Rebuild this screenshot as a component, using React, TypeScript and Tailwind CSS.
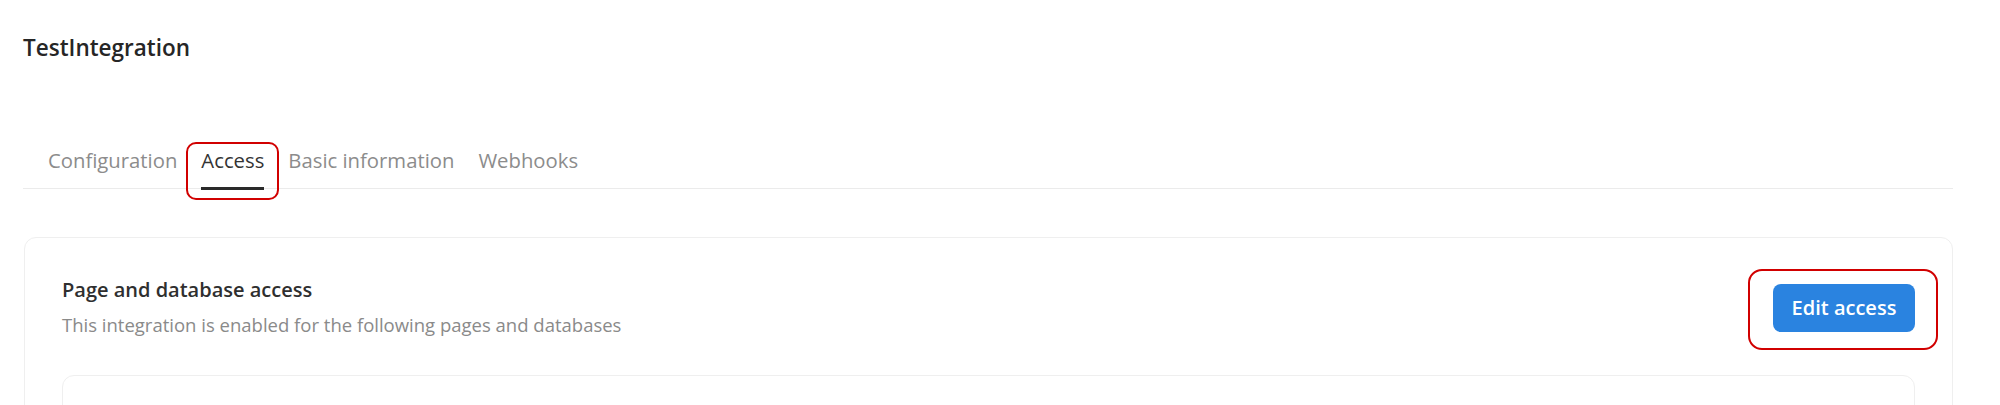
import { useState } from 'react';

const tabs = ['Configuration', 'Access', 'Basic information', 'Webhooks'];

export default function App() {
  const [active, setActive] = useState('Access');

  return (
    <div className="min-h-screen bg-white pl-[23px] pr-[47px] pt-[34px] font-['Open_Sans',sans-serif] text-[#2f2f2f]">
      <h1 className="text-[22.5px] leading-[28px] font-semibold text-[#262626]">TestIntegration</h1>

      <nav className="mt-[74px] flex gap-[24px] pl-[25px] border-b border-[#ebebeb]">
        {tabs.map((t) => {
          const on = t === active;
          return (
            <button
              key={t}
              onClick={() => setActive(t)}
              className={
                'relative -mb-[2px] pt-[10px] pb-[13px] border-b-[3px] text-[20.3px] leading-[28px] ' +
                (on ? 'border-[#2a2a2a] text-[#333]' : 'border-transparent text-[#8c8c8c]')
              }
            >
              {t}
              {on && (
                <span className="pointer-events-none absolute -left-[15px] -right-[15px] top-[6px] -bottom-[13px] rounded-[10px] border-2 border-[#d10000]" />
              )}
            </button>
          );
        })}
      </nav>

      <section className="mt-[48px] ml-px rounded-xl border border-[#efefef] px-[37px] pt-[38px]">
        <div className="flex items-center justify-between">
          <div>
            <h2 className="text-[20px] leading-[28px] font-semibold text-[#2f2f2f]">Page and database access</h2>
            <p className="mt-[7px] text-[18.5px] leading-[28px] text-[#8a8a8a]">
              This integration is enabled for the following pages and databases
            </p>
          </div>
          <div className="relative">
            <button className="h-[48px] w-[142px] rounded-lg bg-[#2a83e0] text-[20px] font-semibold text-white">
              Edit access
            </button>
            <span className="pointer-events-none absolute -left-[25px] -right-[23px] -top-[15px] -bottom-[18px] rounded-[14px] border-2 border-[#d10000]" />
          </div>
        </div>

        <div className="mt-[36px] h-[200px] rounded-xl border border-[#efefef]" />
      </section>
    </div>
  );
}
